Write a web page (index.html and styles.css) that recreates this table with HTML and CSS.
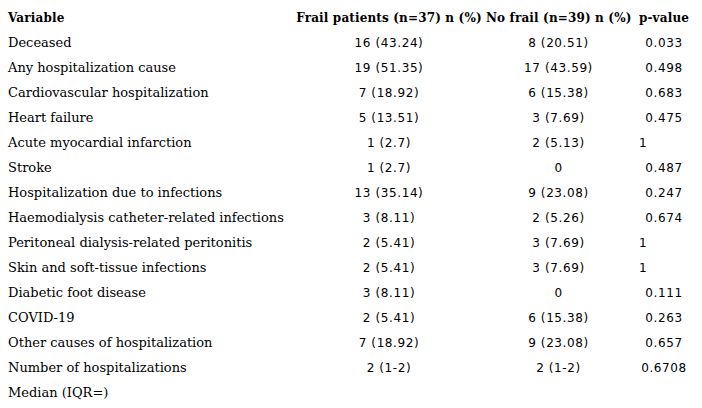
FILE: index.html
```html
<!DOCTYPE html>
<html>
<head>
<meta charset="utf-8">
<link rel="stylesheet" href="styles.css">
</head>
<body>
<div class="table">
  <div class="row head">
    <div class="c var">Variable</div>
    <div class="c">Frail patients (n=37) n (%)</div>
    <div class="c">No frail (n=39) n (%)</div>
    <div class="c">p-value</div>
  </div>
  <div class="row"><div class="c var">Deceased</div><div class="c num">16 (43.24)</div><div class="c num">8 (20.51)</div><div class="c num">0.033</div></div>
  <div class="row"><div class="c var">Any hospitalization cause</div><div class="c num">19 (51.35)</div><div class="c num">17 (43.59)</div><div class="c num">0.498</div></div>
  <div class="row"><div class="c var">Cardiovascular hospitalization</div><div class="c num">7 (18.92)</div><div class="c num">6 (15.38)</div><div class="c num">0.683</div></div>
  <div class="row"><div class="c var">Heart failure</div><div class="c num">5 (13.51)</div><div class="c num">3 (7.69)</div><div class="c num">0.475</div></div>
  <div class="row"><div class="c var">Acute myocardial infarction</div><div class="c num">1 (2.7)</div><div class="c num">2 (5.13)</div><div class="c num one">1</div></div>
  <div class="row"><div class="c var">Stroke</div><div class="c num">1 (2.7)</div><div class="c num">0</div><div class="c num">0.487</div></div>
  <div class="row"><div class="c var">Hospitalization due to infections</div><div class="c num">13 (35.14)</div><div class="c num">9 (23.08)</div><div class="c num">0.247</div></div>
  <div class="row"><div class="c var">Haemodialysis catheter-related infections</div><div class="c num">3 (8.11)</div><div class="c num">2 (5.26)</div><div class="c num">0.674</div></div>
  <div class="row"><div class="c var">Peritoneal dialysis-related peritonitis</div><div class="c num">2 (5.41)</div><div class="c num">3 (7.69)</div><div class="c num one">1</div></div>
  <div class="row"><div class="c var">Skin and soft-tissue infections</div><div class="c num">2 (5.41)</div><div class="c num">3 (7.69)</div><div class="c num one">1</div></div>
  <div class="row"><div class="c var">Diabetic foot disease</div><div class="c num">3 (8.11)</div><div class="c num">0</div><div class="c num">0.111</div></div>
  <div class="row"><div class="c var">COVID-19</div><div class="c num">2 (5.41)</div><div class="c num">6 (15.38)</div><div class="c num">0.263</div></div>
  <div class="row"><div class="c var">Other causes of hospitalization</div><div class="c num">7 (18.92)</div><div class="c num">9 (23.08)</div><div class="c num">0.657</div></div>
  <div class="row"><div class="c var">Number of hospitalizations</div><div class="c num">2 (1-2)</div><div class="c num">2 (1-2)</div><div class="c num">0.6708</div></div>
  <div class="row"><div class="c var">Median (IQR=)</div><div class="c"></div><div class="c"></div><div class="c"></div></div>
</div>
</body>
</html>
```
FILE: styles.css
```css
html, body {
  margin: 0;
  padding: 0;
  background: #fff;
}
body {
  font-family: "DejaVu Serif", serif;
  font-size: 13px;
  color: #000;
}
.table {
  padding: 5px 0 0 6px;
  display: grid;
}
.row {
  display: grid;
  grid-template-columns: 288px 190px 149px 62px;
  height: 25px;
  align-items: center;
}
.c {
  padding: 0 2px;
  text-align: center;
  white-space: nowrap;
}
.c.var {
  text-align: left;
}
.head .c {
  font-weight: bold;
  font-size: 12px;
  letter-spacing: 0.15px;
}
.num {
  font-family: "DejaVu Sans", sans-serif;
  font-size: 12px;
  letter-spacing: 0.6px;
}
.num.one {
  text-align: left;
  padding-left: 6px;
}
```
